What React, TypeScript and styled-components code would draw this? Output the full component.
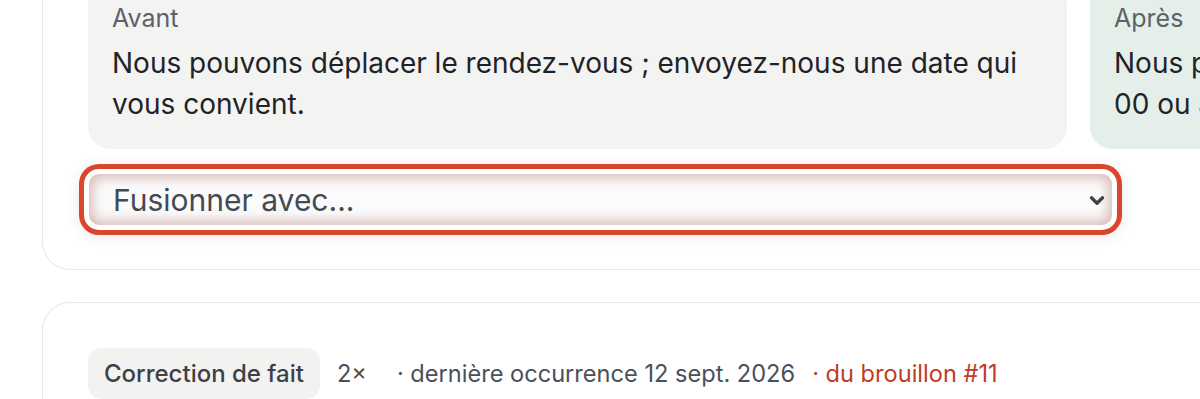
import styled, { createGlobalStyle } from "styled-components";

const GlobalStyle = createGlobalStyle`
  html, body {
    margin: 0;
    padding: 0;
    background: #ffffff;
    overflow: hidden;
  }
  body {
    font-family: Inter, "Noto Sans", sans-serif;
    color: #1f2328;
  }
`;

const Page = styled.div`
  width: 1200px;
  height: 399px;
  overflow: hidden;
`;

const Stack = styled.div`
  display: flex;
  flex-direction: column;
  gap: 32px;
  margin-top: -65px;
  padding-left: 42px;
`;

const Card = styled.section`
  width: 2160px;
  box-sizing: border-box;
  border: 1.5px solid #e6e6e3;
  border-radius: 28px;
  padding: 45px 45px 44px;
  background: #ffffff;
`;

const Compare = styled.div`
  display: grid;
  grid-template-columns: 979px 979px;
  gap: 23px;
`;

const Pane = styled.div<{ $tone: "before" | "after" }>`
  background: ${(p) => (p.$tone === "after" ? "#e5efe9" : "#f3f3f1")};
  border-radius: 22px;
  padding: 20px 24px 24px;
`;

const PaneLabel = styled.div`
  font-size: 25px;
  line-height: 34px;
  color: #5d6269;
`;

const PaneText = styled.p`
  margin: 8px 0 0;
  font-size: 28px;
  line-height: 41px;
  color: #1f2328;
  white-space: nowrap;
`;

const SelectWrap = styled.div`
  position: relative;
  width: 1023px;
  margin-top: 25px;
  margin-left: 1px;
`;

const Select = styled.select`
  appearance: none;
  width: 100%;
  height: 51px;
  box-sizing: border-box;
  border: none;
  border-radius: 10px;
  padding: 0 56px 0 24px;
  font-family: Inter, "Noto Sans", sans-serif;
  font-size: 30px;
  color: #434a53;
  background: #fbfbfb;
  outline: none;
  box-shadow: inset 0 0 13px 3px rgba(170, 105, 100, 0.48), 0 0 0 5px #ffffff,
    0 0 0 10px #d9462b, 0 2px 16px 8px rgba(0, 0, 0, 0.12);
`;

const Chevron = styled.svg`
  position: absolute;
  right: 4px;
  top: 50%;
  transform: translateY(-50%);
  pointer-events: none;
`;

const MetaRow = styled.div`
  display: flex;
  align-items: center;
  gap: 17px;
  font-size: 23.6px;
  line-height: 33px;
  color: #4b5058;
`;

const Tag = styled.span`
  background: #f2f2f0;
  border-radius: 14px;
  padding: 9px 16px;
  font-size: 24px;
  font-weight: 500;
  color: #3d4147;
`;

const Meta = styled.span<{ $accent?: boolean; $spaced?: boolean }>`
  color: ${(p) => (p.$accent ? "#c23b26" : "#4b5058")};
  margin-right: ${(p) => (p.$spaced ? "13px" : "0")};
`;

const App = () => {
  return (
    <Page>
      <GlobalStyle />
      <Stack>
        <Card>
          <Compare>
            <Pane $tone="before">
              <PaneLabel>Avant</PaneLabel>
              <PaneText>
                Nous pouvons déplacer le rendez-vous ; envoyez-nous une date qui
                <br />
                vous convient.
              </PaneText>
            </Pane>
            <Pane $tone="after">
              <PaneLabel>Après</PaneLabel>
              <PaneText>
                Nous pouvons déplacer le rendez-vous à mardi 10 h 00 ou jeudi 14 h
                <br />
                00 ou à une autre date qui vous convient.
              </PaneText>
            </Pane>
          </Compare>
          <SelectWrap>
            <Select defaultValue="">
              <option value="">Fusionner avec...</option>
            </Select>
            <Chevron width="22" height="22" viewBox="0 0 24 24" fill="none">
              <path
                d="M6 9.5l6 6 6-6"
                stroke="#3f4349"
                strokeWidth="3.6"
                strokeLinecap="round"
                strokeLinejoin="round"
              />
            </Chevron>
          </SelectWrap>
        </Card>
        <Card>
          <MetaRow>
            <Tag>Correction de fait</Tag>
            <Meta $spaced>2×</Meta>
            <Meta>· dernière occurrence 12 sept. 2026</Meta>
            <Meta $accent>· du brouillon #11</Meta>
          </MetaRow>
        </Card>
      </Stack>
    </Page>
  );
};

export default App;
